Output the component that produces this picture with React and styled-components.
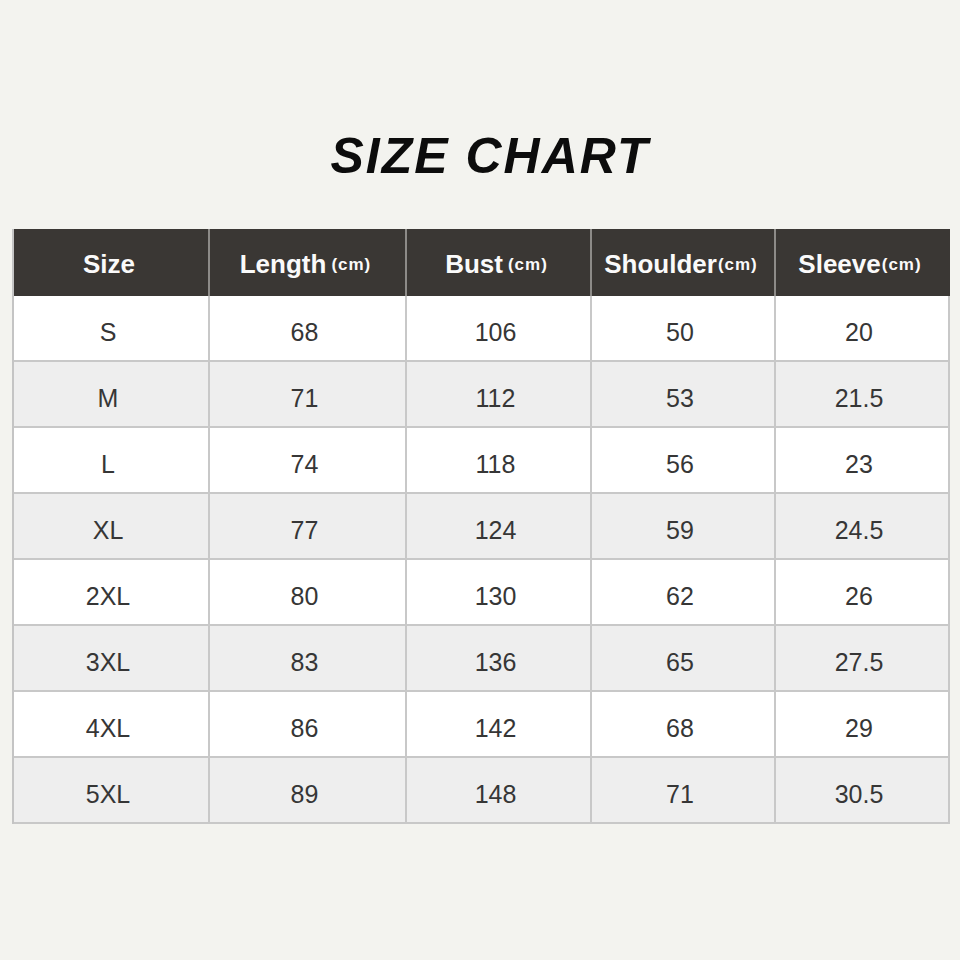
import styled, { createGlobalStyle } from 'styled-components';

const GlobalStyle = createGlobalStyle`
  html, body {
    margin: 0;
    padding: 0;
    background: #f3f3ef;
  }
  body {
    font-family: 'Liberation Sans', Arial, sans-serif;
  }
`;

const Page = styled.div`
  width: 960px;
  height: 960px;
  padding-top: 131px;
  box-sizing: border-box;
  background: #f3f3ef;
`;

const Title = styled.h1`
  margin: 0 0 48px;
  padding-left: 20px;
  font-size: 50px;
  line-height: 50px;
  font-weight: 700;
  font-style: italic;
  letter-spacing: 2px;
  text-align: center;
  color: #0c0c0c;
`;

const Table = styled.div`
  margin: 0 12px 0 12px;
  width: 936px;
  display: grid;
  grid-template-columns: 196px 197px 185px 184px 174px;
  grid-template-rows: 67px repeat(8, 66px);
  border-left: 2px solid #c4c4c4;
  box-sizing: border-box;
`;

const HeadCell = styled.div`
  background: #3a3734;
  color: #fafafa;
  display: flex;
  align-items: center;
  justify-content: center;
  padding: 4px 4px 0 0;
  font-size: 26px;
  font-weight: 700;
  border-right: 2px solid ${(p) => (p.$last ? '#3a3734' : '#8d8b88')};
  box-sizing: border-box;
`;

const Unit = styled.span`
  font-size: 17px;
  letter-spacing: 1px;
  margin-left: ${(p) => (p.$tight ? '1px' : '5px')};
`;

const Cell = styled.div`
  background: ${(p) => (p.$shaded ? '#eeeeee' : '#ffffff')};
  color: #363636;
  display: flex;
  align-items: center;
  justify-content: center;
  padding: 8px 6px 0 0;
  font-size: 25px;
  border-right: 2px solid #c8c8c8;
  border-bottom: 2px solid #c8c8c8;
  box-sizing: border-box;
`;

const headers = [
  { label: 'Size' },
  { label: 'Length', unit: true },
  { label: 'Bust', unit: true },
  { label: 'Shoulder', unit: true, tight: true },
  { label: 'Sleeve', unit: true, tight: true },
];

const rows = [
  ['S', '68', '106', '50', '20'],
  ['M', '71', '112', '53', '21.5'],
  ['L', '74', '118', '56', '23'],
  ['XL', '77', '124', '59', '24.5'],
  ['2XL', '80', '130', '62', '26'],
  ['3XL', '83', '136', '65', '27.5'],
  ['4XL', '86', '142', '68', '29'],
  ['5XL', '89', '148', '71', '30.5'],
];

const App = () => {
  return (
    <>
      <GlobalStyle />
      <Page>
        <Title>SIZE CHART</Title>
        <Table>
          {headers.map((h, i) => (
            <HeadCell key={h.label} $last={i === headers.length - 1}>
              {h.label}
              {h.unit && <Unit $tight={h.tight}>(cm)</Unit>}
            </HeadCell>
          ))}
          {rows.map((row, r) =>
            row.map((val, c) => (
              <Cell key={`${r}-${c}`} $shaded={r % 2 === 1}>
                {val}
              </Cell>
            ))
          )}
        </Table>
      </Page>
    </>
  );
};

export default App;
